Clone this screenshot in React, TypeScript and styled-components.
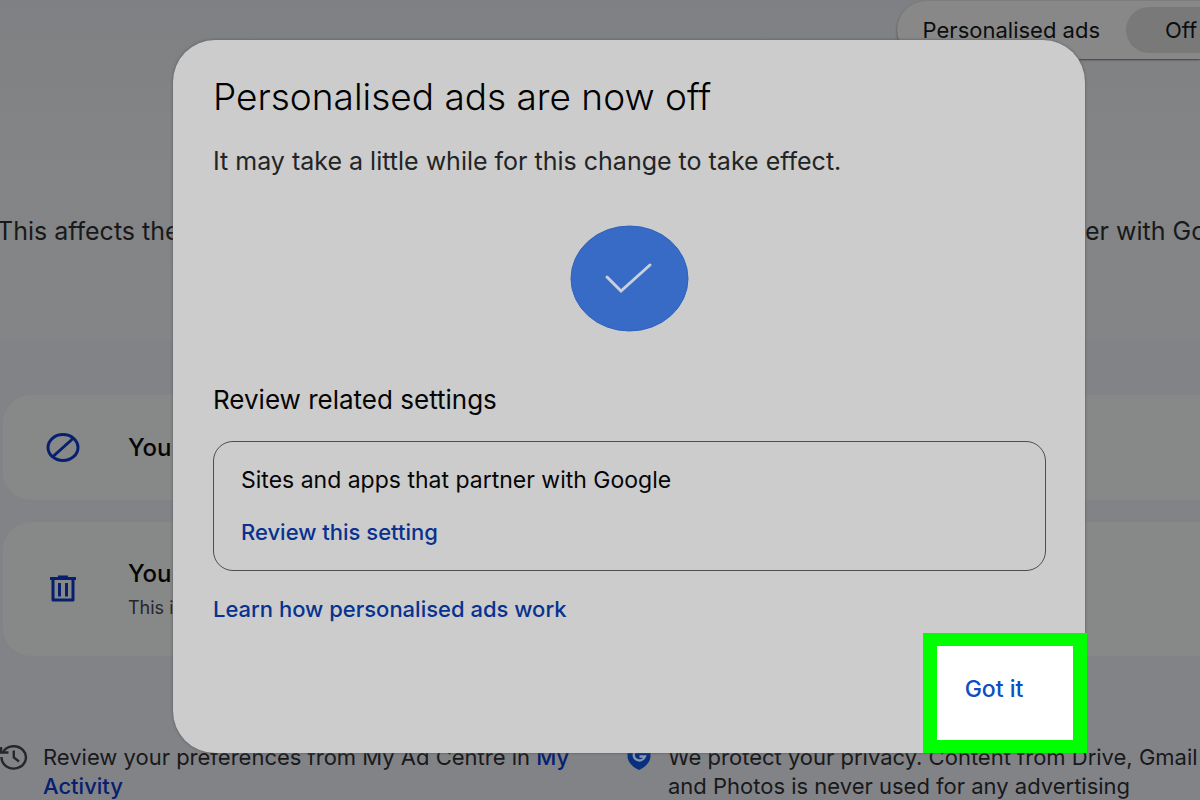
import React from "react";
import styled, { createGlobalStyle } from "styled-components";

const GlobalStyle = createGlobalStyle`
  * { box-sizing: border-box; }
  body {
    margin: 0;
    background: #828387;
    font-family: Inter, "Liberation Sans", sans-serif;
    color: #0c0d0f;
  }
  h1, h2, h3, p, ul { margin: 0; padding: 0; }
  button { font-family: inherit; border: 0; cursor: pointer; }
`;

const Page = styled.div`
  position: relative;
  min-height: 100vh;
  overflow: hidden;
`;

const Top = styled.div`
  height: 340px;
  background: linear-gradient(#7f8083, #838485 40%, #848586);
`;

const Header = styled.header`
  display: flex;
  justify-content: flex-end;
  padding-top: 1px;
`;

const AdsToggle = styled.div`
  display: flex;
  align-items: center;
  gap: 26px;
  height: 58px;
  padding-left: 26px;
  border-radius: 29px 0 0 29px;
  background: #888888;
  box-shadow: 0 1px 2px #3c3d3f;
  font-size: 22px;
  line-height: 28px;
`;

const OffButton = styled.button`
  width: 74px;
  height: 46px;
  padding: 0 0 0 39px;
  border-radius: 23px 0 0 23px;
  background: #797979;
  color: #0c0d0f;
  font-size: 22px;
  text-align: left;
`;

const Intro = styled.p`
  display: flex;
  justify-content: space-between;
  margin: 158px 0 0 -3px;
  font-size: 25px;
  line-height: 28px;
  white-space: nowrap;
  color: #18191b;
`;

const IntroEnd = styled.span`
  width: 115px;
`;

const Cards = styled.section`
  display: flex;
  flex-direction: column;
  gap: 22px;
  padding: 55px 0 0 3px;
`;

const Card = styled.article<{ $tall?: boolean }>`
  display: flex;
  align-items: center;
  gap: 48px;
  height: ${(p) => (p.$tall ? 134 : 105)}px;
  padding-left: 43px;
  border-radius: 28px 0 0 28px;
  background: #878888;
`;

const CardTitle = styled.h3`
  font-size: 24px;
  line-height: 32px;
  font-weight: 500;
  color: #050505;
`;

const CardText = styled.p`
  padding-top: 6px;
  font-size: 18px;
  line-height: 24px;
  color: #25262a;
`;

const Notes = styled.footer`
  display: grid;
  grid-template-columns: 627px 1fr;
  padding-top: 87px;
`;

const Note = styled.div<{ $gap: number }>`
  display: flex;
  gap: ${(p) => p.$gap}px;
  font-size: 22px;
  line-height: 29px;
  color: #18191b;
  white-space: nowrap;

  svg { flex: none; }
`;

const Link = styled.a<{ $dim?: boolean }>`
  color: ${(p) => (p.$dim ? "#06206f" : "#08328f")};
  font-size: 22px;
  font-weight: 500;
  text-decoration: none;
`;

const Overlay = styled.div`
  position: absolute;
  inset: 0;
  display: flex;
  align-items: flex-start;
  padding: 40px 115px 0 173px;
`;

const Dialog = styled.section`
  flex: 1;
  display: flex;
  flex-direction: column;
  padding: 39px 39px 0 40px;
  border-radius: 42px;
  background: #cccccc;
  box-shadow: 0 0 3px #55565a;
`;

const Title = styled.h1`
  font-size: 37px;
  line-height: 36px;
  font-weight: 300;
  color: #000000;
`;

const Lead = styled.p`
  margin-top: 32px;
  font-size: 25px;
  line-height: 28px;
  color: #222426;
`;

const Done = styled.svg`
  align-self: center;
  margin-top: 50px;
`;

const Subtitle = styled.h2`
  margin-top: 54px;
  font-size: 26px;
  line-height: 28px;
  font-weight: 400;
  color: #050505;
`;

const SettingBox = styled.div`
  display: flex;
  flex-direction: column;
  gap: 24px;
  margin-top: 27px;
  padding: 24px 27px;
  border: 1px solid #4c4d4e;
  border-radius: 20px;
  font-size: 23px;
  line-height: 28px;
  color: #050505;
`;

const More = styled.p`
  margin-top: 24px;
  font-size: 22px;
  line-height: 28px;
`;

const Actions = styled.div`
  display: flex;
  justify-content: flex-end;
  margin: 10px -41px 0 0;
`;

const Highlight = styled.div`
  display: flex;
  width: 164px;
  height: 120px;
  border: solid #00ff00;
  border-width: 13px 14px;
`;

const GotIt = styled.button`
  flex: 1;
  padding: 0 22px 8px 0;
  background: #ffffff;
  color: #0b4fc0;
  font-size: 23px;
  font-weight: 500;
`;

const BlockIcon = () => (
  <svg width="34" height="30" viewBox="0 0 34 30" fill="none" stroke="#06206f" strokeWidth="3" aria-hidden="true">
    <ellipse cx="17" cy="14.500" rx="15" ry="13" />
    <path d="M7 23.500 27 5.500" />
  </svg>
);

const TrashIcon = () => (
  <svg width="34" height="30" viewBox="0 0 34 30" fill="none" stroke="#06206f" strokeWidth="3" aria-hidden="true">
    <path d="M4 4.500H30M12 3H22" />
    <path d="M7 5V26H27V5" strokeLinejoin="round" />
    <path d="M13.500 9V22.500M20.500 9V22.500" />
  </svg>
);

const HistoryIcon = () => (
  <svg width="28" height="28" viewBox="0 0 28 28" fill="none" stroke="#26272b" strokeWidth="2.400" aria-hidden="true">
    <path d="M1.500 14A12.200 11.200 0 1 0 3 9" />
    <path d="M1 4V9.500H8.500" />
    <path d="M13.800 7.500V14.500L19 18.500" />
  </svg>
);

const ShieldIcon = () => (
  <svg width="24" height="28" viewBox="0 0 24 28" aria-hidden="true">
    <path d="M12 0 23.500 4V13C23.500 19 18 24.500 12 27 6 24.500 0.500 19 0.500 13V4Z" fill="#08307f" />
    <path d="M17 8.500A5.800 5.500 0 1 0 18 13.500H12.500" fill="none" stroke="#8b96b0" strokeWidth="2.400" />
  </svg>
);

export default function App() {
  return (
    <>
      <GlobalStyle />
      <Page>
        <Top>
          <Header>
            <AdsToggle>
              <span>Personalised ads</span>
              <OffButton type="button">Off</OffButton>
            </AdsToggle>
          </Header>
          <Intro>
            <span>This affects the</span>
            <IntroEnd>er with Go</IntroEnd>
          </Intro>
        </Top>
        <Cards>
          <Card>
            <BlockIcon />
            <CardTitle>You</CardTitle>
          </Card>
          <Card $tall>
            <TrashIcon />
            <div>
              <CardTitle>You</CardTitle>
              <CardText>This i</CardText>
            </div>
          </Card>
        </Cards>
        <Notes>
          <Note $gap={15}>
            <HistoryIcon />
            <p>
              Review your preferences from My Ad Centre in <Link $dim href="#activity">My<br />Activity</Link>
            </p>
          </Note>
          <Note $gap={17}>
            <ShieldIcon />
            <p>
              We protect your privacy. Content from Drive, Gmail<br />
              and Photos is never used for any advertising
            </p>
          </Note>
        </Notes>
        <Overlay>
          <Dialog role="dialog" aria-labelledby="dialog-title">
            <Title id="dialog-title">Personalised ads are now off</Title>
            <Lead>It may take a little while for this change to take effect.</Lead>
            <Done width="120" height="107" viewBox="0 0 120 107" aria-hidden="true">
              <ellipse cx="59.500" cy="53.500" rx="58.500" ry="52.500" fill="#376bc6" stroke="#2c62c0" />
              <path d="M37 52 51 66 80 40" fill="none" stroke="#c9d0dc" strokeWidth="3" strokeLinecap="round" />
            </Done>
            <Subtitle>Review related settings</Subtitle>
            <SettingBox>
              <span>Sites and apps that partner with Google</span>
              <Link href="#partners">Review this setting</Link>
            </SettingBox>
            <More>
              <Link href="#learn">Learn how personalised ads work</Link>
            </More>
            <Actions>
              <Highlight>
                <GotIt type="button">Got it</GotIt>
              </Highlight>
            </Actions>
          </Dialog>
        </Overlay>
      </Page>
    </>
  );
}
